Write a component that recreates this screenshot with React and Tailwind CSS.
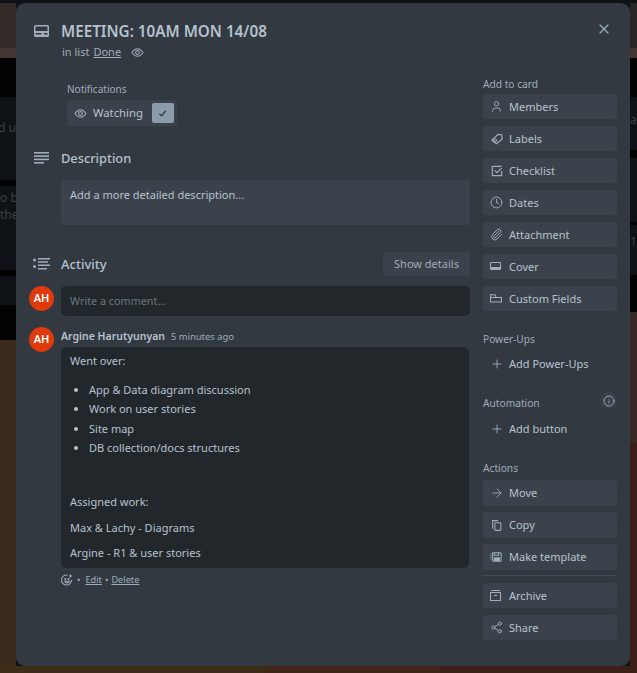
import React from "react";
import { User, Clock, Paperclip, Plus, ArrowRight, Share2, X, Info } from "lucide-react";

const Svg = ({ children, size = 14, className = "" }) => (
  <svg width={size} height={size} viewBox="0 0 24 24" fill="none" stroke="currentColor" strokeWidth="2" className={className}>{children}</svg>
);
const Eye = ({ size = 14 }) => (
  <Svg size={size}><path d="M2 12c3-5 6.500-7 10-7s7 2 10 7c-3 5-6.500 7-10 7s-7-2-10-7z" /><circle cx="12" cy="12" r="3.500" /></Svg>
);
const CardIcon = () => (
  <svg width="15" height="12" viewBox="0 0 15 12" fill="none">
    <rect x="0" y="0" width="15" height="12" rx="1.500" fill="#9fadbc" />
    <rect x="1.500" y="1.500" width="12" height="4.500" fill="#333a41" />
    <rect x="1.500" y="8" width="6" height="1.500" fill="#333a41" />
    <rect x="10" y="8" width="3.500" height="1.500" fill="#333a41" />
  </svg>
);
const LinesIcon = () => (
  <svg width="15" height="12" viewBox="0 0 15 12" fill="#9fadbc">
    <rect width="15" height="1.600" /><rect y="3.300" width="15" height="1.600" /><rect y="6.600" width="15" height="1.600" /><rect y="10" width="10" height="1.600" />
  </svg>
);
const ActivityIcon = () => (
  <svg width="17" height="12" viewBox="0 0 17 12" fill="#9fadbc">
    <circle cx="1.500" cy="2" r="1.500" /><circle cx="1.500" cy="8.500" r="1.500" />
    <rect x="5" y="0" width="12" height="1.500" /><rect x="5" y="3.200" width="10" height="1.500" /><rect x="5" y="6.500" width="12" height="1.500" /><rect x="5" y="10" width="9" height="1.500" />
  </svg>
);
const TagIcon = () => (
  <Svg><path d="M3 14 14 4l6 1 1 7-10 8z" /><circle cx="8.500" cy="14" r="2.500" /></Svg>
);
const CheckIcon = () => (
  <Svg><path d="M20 4H4v16h16v-8" /><path d="m8 11 4 4 8-8" /></Svg>
);
const CoverIcon = () => (
  <svg width="11" height="9" viewBox="0 0 11 9"><rect x="0" y="0" width="11" height="8" rx="1" fill="#9fadbc" /><rect x="1" y="1" width="9" height="4" fill="#3b424b" /></svg>
);
const FieldsIcon = () => (
  <svg width="12" height="9" viewBox="0 0 12 9" fill="none" stroke="#9fadbc" strokeWidth="1.100"><path d="M.5 3V.800h4.500l1 2.200M.5 3.500h11v4.500h-11z" /></svg>
);
const CopyIcon = () => (
  <Svg size={13}><path d="M5 18V3h10" /><rect x="9" y="7" width="11" height="14" rx="1" /></Svg>
);
const TemplateIcon = () => (
  <svg width="12" height="12" viewBox="0 0 14 14" fill="none" stroke="#9fadbc" strokeWidth="1.200"><rect x="3" y="2" width="10" height="10" rx="1" /><path d="M1 3v8" strokeDasharray="1 1" /><rect x="5" y="8" width="6" height="3" fill="#9fadbc" /><path d="M5 2v3h5V2" /></svg>
);
const ArchiveIcon = () => (
  <svg width="11" height="11" viewBox="0 0 11 11" fill="none" stroke="#9fadbc" strokeWidth="1"><path d="M1 .500h9" /><rect x=".5" y="2.500" width="10" height="8" /><path d="M4 5.500h3" /></svg>
);
const SmileIcon = () => (
  <svg width="12" height="12" viewBox="0 0 24 24" fill="none" stroke="currentColor" strokeWidth="2.200"><path d="M21 12a10 10 0 1 1-8-9.800" /><path d="M7.500 14.500c1 2.500 2.500 3.500 4.500 3.500s3.500-1 4.500-3.500z" /><circle cx="8.500" cy="10" r="1" /><circle cx="15" cy="10" r="1" /><path d="M19 1v6M16 4h6" /></svg>
);

const ActionButton = ({ icon, label, tall }) => (
  <div className={`${tall ? "h-[26px]" : "h-[25px]"} flex items-center rounded-[3px] bg-[#3b424b] pl-[7px] text-[11px] text-[#b6c2cf]`}>
    <span className="flex w-[19px] items-center justify-start text-[#9fadbc]">{icon}</span>
    <span className="pt-[1px]">{label}</span>
  </div>
);
const PlainButton = ({ label }) => (
  <div className="flex h-[25px] items-center pl-[7px] text-[11px] text-[#b6c2cf]">
    <span className="flex w-[19px] items-center text-[#9fadbc]"><Plus size={14} strokeWidth={1.500} /></span>
    <span className="pt-[1px]">{label}</span>
  </div>
);
const SideLabel = ({ children, className = "" }) => (
  <div className={`text-[10.200px] leading-[14px] text-[#9fadbc] ${className}`}>{children}</div>
);
const Avatar = ({ className = "" }) => (
  <div className={`flex h-[25px] w-[25px] shrink-0 items-center justify-center rounded-full bg-[#e0390c] text-[11px] font-semibold text-white ${className}`}>AH</div>
);
const Band = ({ h, c, children }) => (
  <div style={{ height: h, background: c }} className="overflow-hidden whitespace-nowrap text-[12px] text-[#3d4248]">{children}</div>
);

export default function App() {
  return (
    <div className="relative h-[673px] w-[637px] overflow-hidden bg-[#0f1215] font-['Noto_Sans',sans-serif]">
      <div className="flex h-[673px] flex-col">
        <div className="h-[3px] bg-[#0f1215]" />
        <div className="flex h-[663px] justify-between">
          <div className="flex w-4 flex-col">
            <Band h={45} c="#342a28" />
            <Band h={10} c="#433632" />
            <Band h={39} c="#030303" />
            <Band h={83} c="#0e1115"><div className="flex justify-end pt-[22px]">ed u</div></Band>
            <Band h={6} c="#030303" />
            <Band h={84} c="#0e1115"><div className="pt-[3px]">o b</div><div className="-mt-[1px]">the</div></Band>
            <Band h={6} c="#030303" />
            <Band h={29} c="#0e1115" />
            <Band h={35} c="#030303" />
            <Band h={326} c="#3c2b1c" />
          </div>
          <div className="flex w-[7px] flex-col">
            <Band h={45} c="#2b2626" />
            <Band h={10} c="#433632" />
            <Band h={39} c="#030303" />
            <Band h={53} c="#0e1115"><div className="pt-[14px]">a</div></Band>
            <Band h={8} c="#030303" />
            <Band h={64} c="#0e1115" />
            <Band h={3} c="#030303" />
            <Band h={50} c="#0e1115"><div className="pt-[8px]">10</div></Band>
            <Band h={37} c="#030303" />
            <Band h={131} c="#3a2a25" />
            <Band h={223} c="#3d1f1a" />
          </div>
        </div>
        <div className="flex h-[7px]">
          <div className="w-[265px] bg-[#3e2c18]" />
          <div className="w-[175px] bg-[#3f2618]" />
          <div className="flex-1 bg-[#3d1f1a]" />
        </div>
      </div>

      <div className="absolute left-4 top-[3px] flex h-[663px] w-[614px] rounded-[9px] bg-[#323940] text-[#b6c2cf]">
        <button className="absolute right-[18px] top-[18px] text-[#9fadbc]"><X size={16} strokeWidth={1.800} /></button>

        <div className="w-[467px] shrink-0">
          <div className="ml-[18px] flex h-[22px] mt-[17px] items-center">
            <span className="flex w-[27px]"><CardIcon /></span>
            <h1 className="text-[15.250px] font-semibold leading-[22px] text-[#b6c2cf]">MEETING: 10AM MON 14/08</h1>
          </div>
          <div className="ml-[46px] mt-[1px] flex h-[18px] items-center text-[11px] text-[#9fadbc]">
            in list <span className="ml-1 underline">Done</span>
            <span className="ml-[10px] flex"><Eye size={13} /></span>
          </div>

          <div className="ml-[51px] mt-[21px] text-[10px] leading-[14px] text-[#9fadbc]">Notifications</div>
          <div className="ml-[51px] mt-[4px] flex h-[26px] w-[110px] items-center rounded-[3px] bg-[#3b424b] pl-[7px] text-[11.300px]">
            <span className="flex w-[19px] text-[#9fadbc]"><Eye size={13} /></span>
            Watching
            <span className="ml-[9px] flex h-[20px] w-[22px] items-center justify-center rounded-[2px] bg-[#8c9bab] text-[#1d2125]">
              <svg width="9" height="9" viewBox="0 0 10 10" fill="none" stroke="currentColor" strokeWidth="1.200"><path d="m1.500 5.500 2.500 2 4.500-5.500" /></svg>
            </span>
          </div>

          <div className="ml-[18px] mt-[22px] flex h-[20px] items-center">
            <span className="flex w-[27px]"><LinesIcon /></span>
            <h2 className="pt-[1px] text-[12.800px] font-medium">Description</h2>
          </div>
          <div className="ml-[45px] mt-[12px] h-[45px] w-[409px] rounded-[3px] bg-[#3b424b] px-[9px] pt-[6px] text-[11px] leading-[18px]">Add a more detailed description...</div>

          <div className="ml-[17px] mt-[27px] flex h-[24px] w-[437px] items-center justify-between">
            <div className="flex items-center">
              <span className="flex w-[28px]"><ActivityIcon /></span>
              <h2 className="pt-[1px] text-[13px] font-medium">Activity</h2>
            </div>
            <div className="flex h-[24px] w-[87px] items-center justify-center rounded-[3px] bg-[#3b424b] text-[11px] text-[#9fadbc]">Show details</div>
          </div>

          <div className="ml-[13px] mt-[10px] flex">
            <Avatar />
            <div className="ml-[7px] flex h-[30px] w-[409px] items-center rounded-[5px] bg-[#22272b] px-[9px] text-[10.800px] text-[#6b7682]">Write a comment...</div>
          </div>

          <div className="ml-[13px] mt-[11px] flex">
            <Avatar />
            <div className="ml-[7px] w-[408px]">
              <div className="flex h-[20px] items-baseline">
                <span className="text-[10.500px] font-semibold leading-[18px]">Argine Harutyunyan</span>
                <span className="ml-[6px] text-[9.400px] text-[#9fadbc]">5 minutes ago</span>
              </div>
              <div className="h-[221px] rounded-[6px] bg-[#22272b] px-[9px] pt-[4px] text-[11px]">
                <p className="leading-[19px]">Went over:</p>
                <ul className="ml-[19px] mt-[10px] list-disc leading-[19.300px]">
                  <li>App &amp; Data diagram discussion</li>
                  <li>Work on user stories</li>
                  <li>Site map</li>
                  <li>DB collection/docs structures</li>
                </ul>
                <p className="mt-[35px] leading-[19px]">Assigned work:</p>
                <p className="mt-[7px] leading-[19px]">Max &amp; Lachy - Diagrams</p>
                <p className="mt-[6px] leading-[19px]">Argine - R1 &amp; user stories</p>
              </div>
              <div className="mt-[5px] flex h-[14px] items-center text-[9.200px] text-[#9fadbc]">
                <span className="flex"><SmileIcon /></span>
                <span className="mx-[4px]">•</span>
                <span className="ml-[1px] underline">Edit</span>
                <span className="mx-[3px]">•</span>
                <span className="underline">Delete</span>
              </div>
            </div>
          </div>
        </div>

        <div className="w-[134px] shrink-0">
          <SideLabel className="mt-[74px]">Add to card</SideLabel>
          <div className="mt-[3px] flex flex-col gap-[7px]">
            <ActionButton icon={<User size={13} strokeWidth={1.700} />} label="Members" />
            <ActionButton icon={<TagIcon />} label="Labels" />
            <ActionButton icon={<CheckIcon />} label="Checklist" />
            <ActionButton icon={<Clock size={13} strokeWidth={1.800} />} label="Dates" />
            <ActionButton icon={<Paperclip size={13} strokeWidth={1.800} />} label="Attachment" />
            <ActionButton icon={<CoverIcon />} label="Cover" />
            <ActionButton icon={<FieldsIcon />} label="Custom Fields" />
          </div>
          <SideLabel className="mt-[21px]">Power-Ups</SideLabel>
          <div className="mt-[5px]"><PlainButton label="Add Power-Ups" /></div>
          <div className="relative mt-[20px]">
            <SideLabel>Automation</SideLabel>
            <span className="absolute right-0 -top-[4px] flex h-[17px] w-[17px] items-center justify-center rounded-full bg-[#39404a] text-[#9fadbc]"><Info size={12} strokeWidth={1.800} /></span>
          </div>
          <div className="mt-[6px]"><PlainButton label="Add button" /></div>
          <SideLabel className="mt-[20px]">Actions</SideLabel>
          <div className="mt-[5px] flex flex-col gap-[6px]">
            <ActionButton tall icon={<ArrowRight size={14} strokeWidth={1.500} />} label="Move" />
            <ActionButton tall icon={<CopyIcon />} label="Copy" />
            <ActionButton tall icon={<TemplateIcon />} label="Make template" />
          </div>
          <div className="mt-[5px] h-px bg-[#454d56]" />
          <div className="mt-[7px] flex flex-col gap-[7px]">
            <ActionButton icon={<ArchiveIcon />} label="Archive" />
            <ActionButton icon={<Share2 size={13} strokeWidth={1.700} />} label="Share" />
          </div>
        </div>
      </div>
    </div>
  );
}
